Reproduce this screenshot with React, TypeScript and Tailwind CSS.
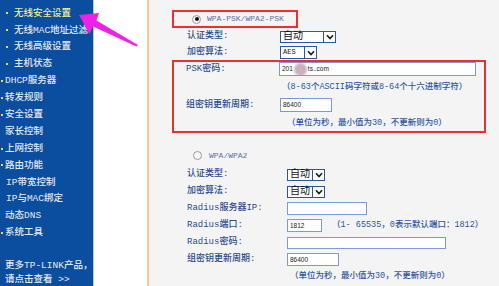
import React from "react";

const CN = '"Liberation Mono", "Noto Sans CJK SC", monospace';

type Item = { t: string; kind: "sub" | "top" | "plain"; active?: boolean; pl?: number };

const items: Item[] = [
  { t: "无线安全设置", kind: "sub", active: true },
  { t: "无线MAC地址过滤", kind: "sub" },
  { t: "无线高级设置", kind: "sub" },
  { t: "主机状态", kind: "sub" },
  { t: "DHCP服务器", kind: "top" },
  { t: "转发规则", kind: "top" },
  { t: "安全设置", kind: "top" },
  { t: "家长控制", kind: "plain" },
  { t: "上网控制", kind: "top" },
  { t: "路由功能", kind: "top" },
  { t: "IP带宽控制", kind: "plain", pl: 6 },
  { t: "IP与MAC绑定", kind: "plain", pl: 6 },
  { t: "动态DNS", kind: "plain" },
  { t: "系统工具", kind: "top" },
];

function Bullet() {
  return <span className="block w-[2px] h-[2px] bg-[#f2d64a] shrink-0" />;
}

function Sidebar() {
  return (
    <div
      className="w-[93px] h-full bg-[#0b4d9f] text-[#e4eaf4] text-[9.5px] font-medium pt-[5px] shrink-0"
      style={{ fontFamily: CN }}
    >
      {items.map((it) => (
        <div key={it.t} className="h-[16.9px] flex items-center whitespace-nowrap leading-none">
          {it.kind === "sub" && (
            <>
              <span className="w-[6px]" />
              <Bullet />
              <span className={"ml-[6px] " + (it.active ? "text-[#ecec9a]" : "")}>{it.t}</span>
            </>
          )}
          {it.kind === "top" && (
            <>
              <span className="w-[1px]" />
              <Bullet />
              <span className="ml-[2px]">{it.t}</span>
            </>
          )}
          {it.kind === "plain" && (
            <span className={it.pl === 6 ? "pl-[6px]" : "pl-[5px]"}>{it.t}</span>
          )}
        </div>
      ))}
      <div className="mt-[18px] pl-[5px] leading-[14px] whitespace-nowrap">
        <div className="h-[14px]">更多TP-LINK产品，</div>
        <div className="h-[14px]">请点击查看 &gt;&gt;</div>
      </div>
    </div>
  );
}

function Radio({ checked }: { checked?: boolean }) {
  return (
    <span className="w-[9px] h-[9px] rounded-full border border-[#9a9a9a] bg-[#f8f8f8] flex items-center justify-center shrink-0">
      {checked && <span className="w-[4px] h-[4px] rounded-full bg-[#111]" />}
    </span>
  );
}

function Select({ text, w, h, small }: { text: string; w: number; h: number; small?: boolean }) {
  return (
    <div
      className="flex border border-[#2d55a6] bg-white box-border"
      style={{ width: w, height: h }}
    >
      <div
        className={
          "flex-1 flex items-center pl-[2px] text-[#111] leading-none " +
          (small ? "text-[7px]" : "text-[10px]")
        }
      >
        {text}
      </div>
      <div className="w-[12px] border-l border-[#2d55a6] flex items-center justify-center">
        <svg width="8" height="6" viewBox="0 0 8 6">
          <path d="M1 1.2 L4 4.5 L7 1.2" fill="none" stroke="#1a1a1a" strokeWidth="1.6" />
        </svg>
      </div>
    </div>
  );
}

function Input({ w, h, children }: { w: number; h: number; children?: React.ReactNode }) {
  return (
    <div
      className="border border-[#7b9bd8] bg-white flex items-center pl-[2px] text-[6.5px] text-[#222] box-border whitespace-nowrap overflow-hidden"
      style={{ width: w, height: h, fontFamily: '"Liberation Sans", sans-serif' }}
    >
      {children}
    </div>
  );
}

function Label({ w, children }: { w: number; children: React.ReactNode }) {
  return (
    <div className="text-[9px] font-medium text-[#2a4a92] whitespace-nowrap shrink-0 leading-none" style={{ width: w }}>
      {children}
    </div>
  );
}

function Hint({ children }: { children: React.ReactNode }) {
  return <div className="text-[8.5px] font-medium text-[#2d55a6] whitespace-nowrap leading-none">{children}</div>;
}

function Main() {
  return (
    <div className="flex-1 h-full bg-[#f4f4f4] pl-[23px] pt-[10px]" style={{ fontFamily: CN }}>
      {/* box 1 */}
      <div className="w-[126px] h-[18px] border-2 border-[#ec2f2f] flex items-center pl-[18px]">
        <Radio checked />
        <span className="ml-[6px] text-[8px] text-[#5a72a6] leading-none">WPA-PSK/WPA2-PSK</span>
      </div>
      <div className="pl-[15px]">
        <div className="h-[17px] flex items-center">
          <Label w={93}>认证类型:</Label>
          <Select text="自动" w={56} h={12} />
        </div>
        <div className="h-[15px] flex items-center">
          <Label w={93}>加密算法:</Label>
          <Select text="AES" w={37} h={13} small />
        </div>
      </div>
      {/* box 2 */}
      <div className="w-[314px] h-[73px] border-2 border-[#ec2f2f] pl-[12px] box-border">
        <div className="h-[14px] flex items-center">
          <Label w={93}>PSK密码:</Label>
          <Input w={197} h={14}>
            <span>201</span>
            <span className="w-[13px] h-[13px] rounded-full bg-[#cdb0b8] blur-[1px] mx-[1px]" />
            <span>ts..com</span>
          </Input>
        </div>
        <div className="h-[22px] flex items-center pl-[96px]">
          <Hint>（8-63个ASCII码字符或8-64个十六进制字符）</Hint>
        </div>
        <div className="h-[14px] flex items-center">
          <Label w={94}>组密钥更新周期:</Label>
          <Input w={52} h={14}>86400</Input>
        </div>
        <div className="h-[19px] flex items-center pt-[4px] pl-[101px]">
          <Hint>（单位为秒，最小值为30，不更新则为0）</Hint>
        </div>
      </div>
      {/* section 2 */}
      <div className="pl-[15px]">
        <div className="mt-[14px] h-[17px] flex items-center pl-[6px]">
          <Radio />
          <span className="ml-[7px] text-[8px] text-[#5a72a6] leading-none">WPA/WPA2</span>
        </div>
        <div className="mt-[2px]">
          <div className="h-[17px] flex items-center">
            <Label w={100}>认证类型:</Label>
            <Select text="自动" w={38} h={12} />
          </div>
          <div className="h-[17px] flex items-center">
            <Label w={100}>加密算法:</Label>
            <Select text="自动" w={38} h={12} />
          </div>
          <div className="h-[17px] flex items-center">
            <Label w={100}>Radius服务器IP:</Label>
            <Input w={80} h={13} />
          </div>
          <div className="h-[17px] flex items-center">
            <Label w={100}>Radius端口:</Label>
            <Input w={35} h={13}>1812</Input>
            <div className="ml-[10px]">
              <Hint>（1- 65535，0表示默认端口：1812）</Hint>
            </div>
          </div>
          <div className="h-[17px] flex items-center">
            <Label w={100}>Radius密码:</Label>
            <Input w={159} h={12} />
          </div>
          <div className="h-[17px] flex items-center">
            <Label w={100}>组密钥更新周期:</Label>
            <Input w={52} h={13}>86400</Input>
          </div>
          <div className="h-[17px] flex items-center pl-[103px]">
            <Hint>（单位为秒，最小值为30，不更新则为0）</Hint>
          </div>
        </div>
      </div>
    </div>
  );
}

export default function App() {
  return (
    <div className="relative w-[499px] h-[286px] overflow-hidden flex bg-white">
      <Sidebar />
      <div className="w-[1px] h-full bg-[#a9c6ee] shrink-0" />
      <div className="w-[53px] h-full bg-white shrink-0" />
      <div className="w-[2px] h-full bg-[#f8c89c] shrink-0" />
      <Main />
      <svg className="absolute left-0 top-0 pointer-events-none" width="499" height="286" viewBox="0 0 499 286">
        <polygon
          points="79,15 99,13 96.5,20.5 138,45 136.5,46.5 93,26.5 89.5,34"
          fill="#ee22e6"
        />
      </svg>
    </div>
  );
}
